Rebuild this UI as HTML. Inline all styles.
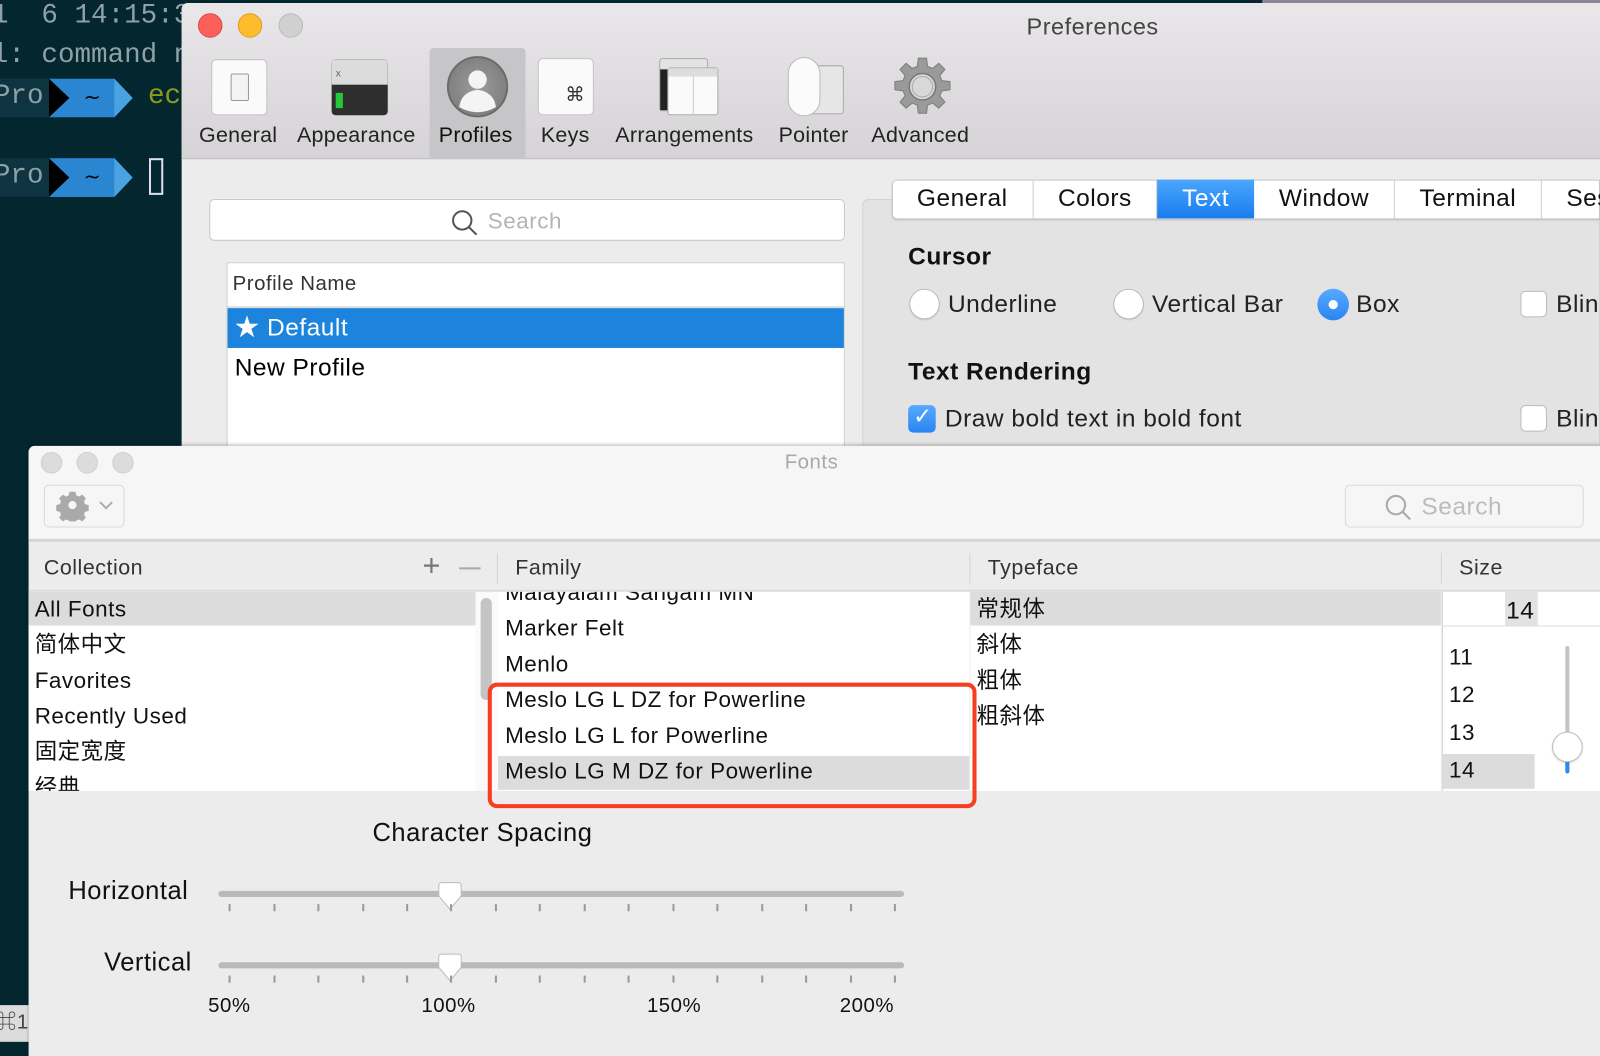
<!DOCTYPE html>
<html><head><meta charset="utf-8"><style>
*{margin:0;padding:0;box-sizing:border-box}
html,body{width:1600px;height:1056px;overflow:hidden;background:#03262f}
#s{position:absolute;left:0;top:0;width:1568px;height:1035px;transform:scale(1.020408);transform-origin:0 0;font-family:"Liberation Sans","Noto Sans CJK SC",sans-serif;color:#111;letter-spacing:0.5px}
.a{position:absolute}
.t{position:absolute;white-space:nowrap;line-height:1}
.mono{font-family:"Liberation Mono","DejaVu Sans Mono",monospace;color:#8fa1a6;font-size:27px;letter-spacing:0}
.lbl{font-size:21px;color:#222;top:122px;letter-spacing:0.3px}
.tab{position:absolute;top:176px;height:38px;border-right:1px solid #cfcfcf;font-size:24px;line-height:38px;text-align:center;background:#fff}
.radio{position:absolute;width:30px;height:30px;border-radius:50%;background:#fff;border:1px solid #bbb;box-shadow:0 1px 1px rgba(0,0,0,.1)}
.chk{position:absolute;width:26px;height:26px;border-radius:5px;background:#fff;border:1px solid #bbb}
.row{position:absolute;font-size:22px;line-height:35px;height:35px;white-space:nowrap}
.tick{position:absolute;width:2px;height:7px;background:#9a9a9a}
</style></head><body><div id="s">
<!-- terminal -->
<div class="a" style="left:1237px;top:0;width:331px;height:4px;background:#8f8496"></div>
<div class="t mono" style="left:-8px;top:3px">1&nbsp;&nbsp;6 14:15:3</div>
<div class="t mono" style="left:-8px;top:42px">l: command n</div>
<div class="a" style="left:0;top:77px;width:50px;height:38px;background:#0d3440"></div>
<div class="t mono" style="left:-6px;top:82px">Pro</div>
<svg class="a" style="left:48px;top:77px" width="90" height="38"><polygon points="0,0 20,19 0,38" fill="#000"/><polygon points="0,0 64,0 82,19 64,38 0,38 20,19" fill="#2b86d2"/><polygon points="64,0 82,19 64,38" fill="#4aa3e0"/><text x="34" y="25" font-size="20" fill="#000" font-family="DejaVu Sans">~</text></svg>
<div class="t mono" style="left:145px;top:82px;color:#8f9a1a">ec</div>
<div class="a" style="left:0;top:155px;width:50px;height:38px;background:#0d3440"></div>
<div class="t mono" style="left:-6px;top:160px">Pro</div>
<svg class="a" style="left:48px;top:155px" width="90" height="38"><polygon points="0,0 20,19 0,38" fill="#000"/><polygon points="0,0 64,0 82,19 64,38 0,38 20,19" fill="#2b86d2"/><polygon points="64,0 82,19 64,38" fill="#4aa3e0"/><text x="34" y="25" font-size="20" fill="#000" font-family="DejaVu Sans">~</text></svg>
<div class="a" style="left:146px;top:155px;width:14px;height:36px;border:2px solid #dde"></div>
<div class="a" style="left:0;top:985px;width:28px;height:36px;background:#dcdcdc"></div>
<div class="t" style="left:-4px;top:992px;font-size:20px;color:#444">⌘1</div>

<!-- preferences -->
<div class="a" style="left:178px;top:3px;width:1390px;height:440px;background:#ececec;border-radius:6px 0 0 0;overflow:hidden">
 <div class="a" style="left:0;top:0;width:1390px;height:153px;background:linear-gradient(#e9e7e9,#d5d3d5);border-bottom:1px solid #b9b9b9"></div>
 <div class="a" style="left:243px;top:44px;width:94px;height:109px;background:#c6c5c7;border-radius:4px 4px 0 0"></div>
</div>
<div class="a" style="left:194px;top:13px;width:24px;height:24px;border-radius:50%;background:#fc605b;border:1px solid #de4a44"></div>
<div class="a" style="left:233px;top:13px;width:24px;height:24px;border-radius:50%;background:#fdbc2e;border:1px solid #dd9f24"></div>
<div class="a" style="left:273px;top:13px;width:24px;height:24px;border-radius:50%;background:#d0d0d0;border:1px solid #bbb"></div>
<div class="t" style="left:1006px;top:15px;font-size:23px;color:#444">Preferences</div>
<!-- toolbar icons -->
<div class="a" style="left:207px;top:58px;width:55px;height:55px;background:#fafafa;border:1px solid #c4c4c4;border-radius:5px"></div>
<div class="a" style="left:226px;top:72px;width:18px;height:27px;background:#f3f3f3;border:1px solid #999;border-radius:2px"></div>
<div class="a" style="left:325px;top:58px;width:55px;height:55px;background:#2e2e2e;border-radius:4px;overflow:hidden"><div class="a" style="left:0;top:0;width:55px;height:25px;background:#dcdcdc"></div><div class="a" style="left:4px;top:33px;width:7px;height:15px;background:#27c73a"></div><div class="t" style="left:4px;top:10px;font-size:10px;color:#666">x</div></div>
<div class="a" style="left:438px;top:55px;width:60px;height:60px;border-radius:50%;background:radial-gradient(#9b9b9b,#777);border:2px solid #6b6b6b"></div>
<svg class="a" style="left:440px;top:57px" width="56" height="56"><circle cx="28" cy="21" r="9" fill="#f4f4f4"/><path d="M10 48 Q12 33 28 31 Q44 33 46 48 Q28 58 10 48Z" fill="#f4f4f4"/></svg>
<div class="a" style="left:527px;top:57px;width:55px;height:56px;background:#fafafa;border:1px solid #c4c4c4;border-radius:5px"></div>
<div class="t" style="left:554px;top:84px;font-size:19px;color:#333;font-family:'DejaVu Sans'">⌘</div>
<div class="a" style="left:646px;top:57px;width:48px;height:52px;background:#e3e3e3;border:1px solid #aaa;border-radius:3px"><div class="a" style="left:0;top:10px;width:8px;height:40px;background:#222"></div></div>
<div class="a" style="left:654px;top:66px;width:50px;height:47px;background:#fafafa;border:1px solid #aaa;border-radius:3px"><div class="a" style="left:0;top:0;width:48px;height:8px;background:#ddd"></div><div class="a" style="left:24px;top:8px;width:1px;height:38px;background:#ccc"></div></div>
<div class="a" style="left:790px;top:64px;width:37px;height:48px;background:#e6e6e6;border:1px solid #aaa;border-radius:3px"></div>
<div class="a" style="left:772px;top:56px;width:32px;height:58px;background:#fbfbfb;border:1px solid #bbb;border-radius:16px"></div>
<svg class="a" style="left:874px;top:55px" width="60" height="60" viewBox="0 0 60 60"><g fill="#9a9a9a" stroke="#7d7d7d" stroke-width="1"><path d="M26 2h8l1 8 5 2 6-5 6 6-5 6 2 5 8 1v8l-8 1-2 5 5 6-6 6-6-5-5 2-1 8h-8l-1-8-5-2-6 5-6-6 5-6-2-5-8-1v-8l8-1 2-5-5-6 6-6 6 5 5-2z"/></g><circle cx="30" cy="30" r="13" fill="#d8d8d8" stroke="#777" stroke-width="1.5"/><circle cx="30" cy="30" r="10" fill="none" stroke="#aaa" stroke-width="1"/></svg>
<div class="t lbl" style="left:195px">General</div>
<div class="t lbl" style="left:291px">Appearance</div>
<div class="t lbl" style="left:430px;color:#111">Profiles</div>
<div class="t lbl" style="left:530px">Keys</div>
<div class="t lbl" style="left:603px">Arrangements</div>
<div class="t lbl" style="left:763px">Pointer</div>
<div class="t lbl" style="left:854px">Advanced</div>
<!-- search & profile list -->
<div class="a" style="left:205px;top:195px;width:623px;height:41px;background:#fff;border:1px solid #c9c9c9;border-radius:5px"></div>
<svg class="a" style="left:441px;top:204px" width="28" height="28"><circle cx="12" cy="12" r="9" fill="none" stroke="#555" stroke-width="2"/><line x1="18.5" y1="18.5" x2="26" y2="26" stroke="#555" stroke-width="2"/></svg>
<div class="t" style="left:478px;top:206px;font-size:22px;color:#b4b4b4">Search</div>
<div class="a" style="left:222px;top:257px;width:606px;height:190px;background:#fff;border:1px solid #cfcfcf"></div>
<div class="t" style="left:228px;top:268px;font-size:20px;color:#333">Profile Name</div>
<div class="a" style="left:223px;top:300px;width:604px;height:2px;background:#dedede"></div>
<div class="a" style="left:223px;top:302px;width:604px;height:39px;background:#1c84dc"></div>
<div class="t" style="left:230px;top:310px;font-size:24px;color:#fff">★ Default</div>
<div class="t" style="left:230px;top:349px;font-size:24px;color:#000">New Profile</div>
<!-- right panel -->
<div class="a" style="left:845px;top:195px;width:723px;height:250px;background:#e3e3e3;border:1px solid #d3d3d3;border-radius:6px 0 0 0"></div>
<div class="a" style="left:874px;top:176px;width:694px;height:39px;background:#fff;border:1px solid #c6c6c6;border-radius:5px 0 0 5px;box-shadow:0 1px 1px rgba(0,0,0,.12)"></div>
<div class="tab" style="left:874px;width:139px;background:transparent">General</div>
<div class="tab" style="left:1013px;width:121px;background:transparent">Colors</div>
<div class="tab" style="left:1134px;width:95px;background:linear-gradient(#4aa6fb,#1a7cf2);color:#fff;border:none">Text</div>
<div class="tab" style="left:1229px;width:138px;background:transparent">Window</div>
<div class="tab" style="left:1367px;width:144px;background:transparent">Terminal</div>
<div class="tab" style="left:1511px;width:80px;background:transparent;text-align:left;padding-left:24px">Session</div>
<div class="t" style="left:890px;top:240px;font-size:24px;font-weight:bold">Cursor</div>
<div class="radio" style="left:891px;top:283px"></div>
<div class="t" style="left:929px;top:287px;font-size:24px;color:#222">Underline</div>
<div class="radio" style="left:1091px;top:283px"></div>
<div class="t" style="left:1129px;top:287px;font-size:24px;color:#222">Vertical Bar</div>
<div class="a" style="left:1291px;top:283px;width:31px;height:31px;border-radius:50%;background:linear-gradient(#57aaff,#2a85f2)"></div>
<div class="a" style="left:1302px;top:294px;width:9px;height:9px;border-radius:50%;background:#fff"></div>
<div class="t" style="left:1329px;top:287px;font-size:24px;color:#222">Box</div>
<div class="chk" style="left:1490px;top:285px"></div>
<div class="t" style="left:1525px;top:287px;font-size:24px;color:#222">Blink</div>
<div class="t" style="left:890px;top:353px;font-size:24px;font-weight:bold">Text Rendering</div>
<div class="a" style="left:890px;top:397px;width:27px;height:27px;border-radius:5px;background:linear-gradient(#57aaff,#2a85f2)"></div>
<div class="t" style="left:895px;top:398px;font-size:22px;color:#fff;font-family:'DejaVu Sans'">✓</div>
<div class="t" style="left:926px;top:399px;font-size:24px;color:#222">Draw bold text in bold font</div>
<div class="chk" style="left:1490px;top:397px"></div>
<div class="t" style="left:1525px;top:399px;font-size:24px;color:#222">Blink</div>

<!-- fonts window -->
<div class="a" style="left:28px;top:437px;width:1540px;height:598px;background:#ececec;border-radius:6px 0 0 0;box-shadow:0 -1px 3px rgba(0,0,0,.25);overflow:hidden">
 <div class="a" style="left:0;top:0;width:1540px;height:94px;background:#f6f6f6;border-bottom:3px solid #d6d6d6"></div>
</div>
<div class="a" style="left:40px;top:443px;width:21px;height:21px;border-radius:50%;background:#dcdcdc;border:1px solid #cfcfcf"></div>
<div class="a" style="left:75px;top:443px;width:21px;height:21px;border-radius:50%;background:#dcdcdc;border:1px solid #cfcfcf"></div>
<div class="a" style="left:110px;top:443px;width:21px;height:21px;border-radius:50%;background:#dcdcdc;border:1px solid #cfcfcf"></div>
<div class="t" style="left:769px;top:443px;font-size:20px;color:#a9a9a9">Fonts</div>
<div class="a" style="left:43px;top:475px;width:79px;height:42px;background:#f6f6f6;border:1px solid #dadada;border-radius:5px"></div>
<svg class="a" style="left:55px;top:481px" width="32" height="30" viewBox="0 0 32 30"><path fill="#aaa" d="M13 2h6l1 4 3 1 3-2 4 4-2 3 1 3 4 1v6l-4 1-1 3 2 3-4 4-3-2-3 1-1 4h-6l-1-4-3-1-3 2-4-4 2-3-1-3-4-1v-6l4-1 1-3-2-3 4-4 3 2 3-1z" transform="translate(1,-1) scale(0.94)"/><circle cx="16" cy="14" r="4" fill="#f6f6f6"/></svg>
<svg class="a" style="left:96px;top:489px" width="16" height="12"><polyline points="2,3 8,9 14,3" fill="none" stroke="#aaa" stroke-width="1.8"/></svg>
<div class="a" style="left:1318px;top:475px;width:234px;height:42px;background:#f6f6f6;border:1px solid #dadada;border-radius:5px"></div>
<svg class="a" style="left:1356px;top:483px" width="28" height="28"><circle cx="12" cy="12" r="9" fill="none" stroke="#aaa" stroke-width="2"/><line x1="18.5" y1="18.5" x2="26" y2="26" stroke="#aaa" stroke-width="2"/></svg>
<div class="t" style="left:1393px;top:485px;font-size:24px;color:#bcbcbc">Search</div>
<!-- header -->
<div class="t" style="left:43px;top:546px;font-size:21px;color:#333">Collection</div>
<div class="t" style="left:414px;top:540px;font-size:30px;color:#777;font-weight:300">+</div>
<div class="a" style="left:450px;top:556px;width:21px;height:2px;background:#aaa"></div>
<div class="a" style="left:487px;top:542px;width:1px;height:30px;background:#d4d4d4"></div>
<div class="t" style="left:505px;top:546px;font-size:21px;color:#333">Family</div>
<div class="a" style="left:950px;top:542px;width:1px;height:30px;background:#d4d4d4"></div>
<div class="t" style="left:968px;top:546px;font-size:21px;color:#333">Typeface</div>
<div class="a" style="left:1412px;top:542px;width:1px;height:30px;background:#d4d4d4"></div>
<div class="t" style="left:1430px;top:546px;font-size:21px;color:#333">Size</div>
<!-- lists -->
<div class="a" style="left:28px;top:578px;width:1540px;height:2px;background:#dcdcdc"></div>
<div class="a" style="left:28px;top:580px;width:438px;height:195px;background:#fff;overflow:hidden">
 <div class="a" style="left:0;top:0;width:438px;height:33px;background:#dcdcdc"></div>
 <div class="row" style="left:6px;top:-1px">All Fonts</div>
 <div class="row" style="left:6px;top:34px">简体中文</div>
 <div class="row" style="left:6px;top:69px">Favorites</div>
 <div class="row" style="left:6px;top:104px">Recently Used</div>
 <div class="row" style="left:6px;top:139px">固定宽度</div>
 <div class="row" style="left:6px;top:174px">经典</div>
</div>
<div class="a" style="left:466px;top:580px;width:22px;height:195px;background:#fafafa"></div>
<div class="a" style="left:471px;top:586px;width:11px;height:100px;background:#c4c4c4;border-radius:6px"></div>
<div class="a" style="left:488px;top:580px;width:462px;height:195px;background:#fff;overflow:hidden">
 <div class="row" style="left:7px;top:-17px">Malayalam Sangam MN</div>
 <div class="row" style="left:7px;top:18px">Marker Felt</div>
 <div class="row" style="left:7px;top:53px">Menlo</div>
 <div class="row" style="left:7px;top:88px">Meslo LG L DZ for Powerline</div>
 <div class="row" style="left:7px;top:123px">Meslo LG L for Powerline</div>
 <div class="a" style="left:0;top:161px;width:462px;height:33px;background:#dcdcdc"></div>
 <div class="row" style="left:7px;top:158px">Meslo LG M DZ for Powerline</div>
</div>
<div class="a" style="left:951px;top:580px;width:461px;height:195px;background:#fff">
 <div class="a" style="left:0;top:0;width:461px;height:33px;background:#dcdcdc"></div>
 <div class="row" style="left:6px;top:-1px">常规体</div>
 <div class="row" style="left:6px;top:34px">斜体</div>
 <div class="row" style="left:6px;top:69px">粗体</div>
 <div class="row" style="left:6px;top:104px">粗斜体</div>
</div>
<div class="a" style="left:1413px;top:580px;width:155px;height:195px;background:#fff;border-left:1px solid #d4d4d4">
 <div class="a" style="left:0;top:33px;width:155px;height:1px;background:#ddd"></div>
 <div class="a" style="left:61px;top:0;width:32px;height:33px;background:#e2e2e2"></div>
 <div class="row" style="left:62px;top:1px;font-size:24px">14</div>
 <div class="row" style="left:6px;top:46px">11</div>
 <div class="row" style="left:6px;top:83px">12</div>
 <div class="row" style="left:6px;top:120px">13</div>
 <div class="a" style="left:0;top:159px;width:90px;height:34px;background:#dcdcdc"></div>
 <div class="row" style="left:6px;top:157px">14</div>
 <div class="a" style="left:120px;top:53px;width:4px;height:125px;background:#c4c4c4;border-radius:2px"></div>
 <div class="a" style="left:120px;top:150px;width:4px;height:28px;background:#2a8cf2;border-radius:2px"></div>
 <div class="a" style="left:107px;top:137px;width:30px;height:30px;border-radius:50%;background:#fff;border:1px solid #bdbdbd;box-shadow:0 1px 2px rgba(0,0,0,.15)"></div>
</div>
<div class="a" style="left:478px;top:669px;width:479px;height:123px;border:4px solid #f63f21;border-radius:9px"></div>
<!-- spacing -->
<div class="t" style="left:365px;top:804px;font-size:25px">Character Spacing</div>
<div class="t" style="left:67px;top:861px;font-size:25px">Horizontal</div>
<div class="t" style="left:102px;top:931px;font-size:25px">Vertical</div>
<div class="a" style="left:214px;top:873px;width:672px;height:6px;background:#b9b9b9;border-radius:3px"></div>
<div class="a" style="left:214px;top:943px;width:672px;height:6px;background:#b9b9b9;border-radius:3px"></div>
<svg class="a" style="left:427px;top:864px" width="28" height="30"><path d="M3 4 Q3 1 6 1 H22 Q25 1 25 4 V14 L14 27 L3 14Z" fill="#fff" stroke="#bbb"/></svg>
<svg class="a" style="left:427px;top:934px" width="28" height="30"><path d="M3 4 Q3 1 6 1 H22 Q25 1 25 4 V14 L14 27 L3 14Z" fill="#fff" stroke="#bbb"/></svg>
<div class="t" style="left:204px;top:976px;font-size:20px">50%</div>
<div class="t" style="left:413px;top:976px;font-size:20px">100%</div>
<div class="t" style="left:634px;top:976px;font-size:20px">150%</div>
<div class="t" style="left:823px;top:976px;font-size:20px">200%</div>
<div class="tick" style="left:224px;top:886px"></div><div class="tick" style="left:268px;top:886px"></div><div class="tick" style="left:311px;top:886px"></div><div class="tick" style="left:355px;top:886px"></div><div class="tick" style="left:398px;top:886px"></div><div class="tick" style="left:441px;top:886px"></div><div class="tick" style="left:485px;top:886px"></div><div class="tick" style="left:528px;top:886px"></div><div class="tick" style="left:572px;top:886px"></div><div class="tick" style="left:615px;top:886px"></div><div class="tick" style="left:659px;top:886px"></div><div class="tick" style="left:702px;top:886px"></div><div class="tick" style="left:746px;top:886px"></div><div class="tick" style="left:789px;top:886px"></div><div class="tick" style="left:833px;top:886px"></div><div class="tick" style="left:876px;top:886px"></div>
<div class="tick" style="left:224px;top:956px"></div><div class="tick" style="left:268px;top:956px"></div><div class="tick" style="left:311px;top:956px"></div><div class="tick" style="left:355px;top:956px"></div><div class="tick" style="left:398px;top:956px"></div><div class="tick" style="left:441px;top:956px"></div><div class="tick" style="left:485px;top:956px"></div><div class="tick" style="left:528px;top:956px"></div><div class="tick" style="left:572px;top:956px"></div><div class="tick" style="left:615px;top:956px"></div><div class="tick" style="left:659px;top:956px"></div><div class="tick" style="left:702px;top:956px"></div><div class="tick" style="left:746px;top:956px"></div><div class="tick" style="left:789px;top:956px"></div><div class="tick" style="left:833px;top:956px"></div><div class="tick" style="left:876px;top:956px"></div>
</div></body></html>
